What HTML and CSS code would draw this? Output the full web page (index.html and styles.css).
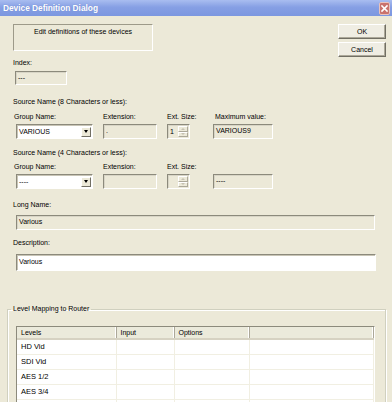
FILE: index.html
```html
<!DOCTYPE html>
<html lang="en">
<head>
  <meta charset="UTF-8" />
  <title>Device Definition Dialog</title>
  <link rel="stylesheet" href="styles.css">
</head>
<body>
  <div class="window">
    <div class="titlebar">
      <span class="title">Device Definition Dialog</span>
      <span class="close-btn">
        <svg width="11" height="13" viewBox="0 0 11 13">
          <path d="M3 4 L8 9 M8 4 L3 9" stroke="#fff" stroke-width="1.6" stroke-linecap="square"/>
        </svg>
      </span>
    </div>

    <div class="content">
      <div class="top-row">
        <div class="note-box">Edit definitions of these devices</div>
        <div class="buttons">
          <button class="btn">OK</button>
          <button class="btn">Cancel</button>
        </div>
      </div>

      <div class="label index-label">Index:</div>
      <div class="field index-field">---</div>

      <div class="label section-label">Source Name (8 Characters or less):</div>
      <div class="name-grid">
        <span class="label col-first">Group Name:</span>
        <span class="label">Extension:</span>
        <span class="label">Ext. Size:</span>
        <span class="label col-max">Maximum value:</span>

        <div class="field combo white">
          <span>VARIOUS</span>
          <span class="drop-btn"><i class="arrow-down"></i></span>
        </div>
        <div class="field ext-field">.</div>
        <div class="field size-field"><span>1</span><span class="spinner"><i class="up"></i><i class="down"></i></span></div>
        <div class="field max-field">VARIOUS9</div>
      </div>

      <div class="label section-label second">Source Name (4 Characters or less):</div>
      <div class="name-grid second-grid">
        <span class="label col-first">Group Name:</span>
        <span class="label">Extension:</span>
        <span class="label">Ext. Size:</span>
        <span></span>

        <div class="field combo white">
          <span>----</span>
          <span class="drop-btn"><i class="arrow-down"></i></span>
        </div>
        <div class="field ext-field"></div>
        <div class="field size-field"><span></span><span class="spinner"><i class="up"></i><i class="down"></i></span></div>
        <div class="field max-field">----</div>
      </div>

      <div class="label long-label">Long Name:</div>
      <div class="field long-field">Various</div>

      <div class="label desc-label">Description:</div>
      <div class="field desc-field white">Various</div>

      <fieldset class="group">
        <legend>Level Mapping to Router</legend>
        <div class="list">
          <table>
            <colgroup>
              <col style="width: 99px">
              <col style="width: 58px">
              <col style="width: 75px">
              <col>
            </colgroup>
            <thead>
              <tr><th>Levels</th><th>Input</th><th>Options</th><th></th></tr>
            </thead>
            <tbody>
              <tr><td>HD Vid</td><td></td><td></td><td></td></tr>
              <tr><td>SDI Vid</td><td></td><td></td><td></td></tr>
              <tr><td>AES 1/2</td><td></td><td></td><td></td></tr>
              <tr><td>AES 3/4</td><td></td><td></td><td></td></tr>
              <tr><td></td><td></td><td></td><td></td></tr>
            </tbody>
          </table>
        </div>
      </fieldset>
    </div>
  </div>
</body>
</html>
```

FILE: styles.css
```css
* { box-sizing: border-box; }

body {
  margin: 0;
  background-color: #ece9d8;
  font-family: "Liberation Sans", Arial, sans-serif;
  font-size: 7px;
  color: #000;
}

.window {
  width: 392px;
  height: 402px;
  overflow: hidden;
  background-color: #ece9d8;
}

.titlebar {
  height: 16px;
  display: flex;
  align-items: center;
  justify-content: space-between;
  padding: 0 2px 0 3px;
  background: linear-gradient(to bottom, #a9bdf0 0%, #869fe4 45%, #7c97e0 100%);
}

.title {
  color: #fff;
  font-weight: bold;
  font-size: 8.3px;
  text-shadow: 0 0 1px #6a83c8;
}

.close-btn {
  width: 11px;
  height: 13px;
  display: flex;
  background-color: #c9726c;
  border: 1px solid #e9c2bd;
  border-radius: 2px;
}
.close-btn svg { margin: -1px; }

.content { padding: 0 6px 0 13px; }

.top-row {
  margin-top: 8px;
  display: flex;
  justify-content: space-between;
  align-items: flex-start;
}

.note-box {
  width: 140px;
  height: 27px;
  border: 1px solid;
  border-color: #9d9a89 #fff #fff #9d9a89;
  text-align: center;
  line-height: 9px;
  padding-top: 2px;
}

.buttons {
  display: flex;
  flex-direction: column;
  gap: 3px;
}

.btn {
  width: 48px;
  height: 15px;
  padding: 0;
  font-family: inherit;
  font-size: 7px;
  color: #000;
  background-color: #efede3;
  border: 1px solid;
  border-color: #fff #716f64 #716f64 #fff;
  box-shadow: inset -1px -1px 0 #aca899;
}

.label {
  display: block;
  line-height: 9px;
  white-space: nowrap;
  color: #000;
}

.field {
  height: 15px;
  border: 1px solid;
  border-color: #8c8a7c #fff #fff #8c8a7c;
  box-shadow: inset 1px 1px 0 #d8d5c6;
  line-height: 12px;
  padding-left: 2px;
  white-space: nowrap;
}
.field.white { background-color: #fff; box-shadow: inset 1px 1px 0 #c8c5b6; }

.index-label { margin-top: 1px; }
.index-field { margin-top: 4px; margin-left: 2px; width: 52px; height: 14px; }

.section-label { margin-top: 12px; }
.section-label.second { margin-top: 9px; }

.name-grid {
  display: grid;
  grid-template-columns: 90px 64px 46px auto;
  row-gap: 3px;
  margin-top: 6px;
}

.col-first { padding-left: 1px; }
.col-max { padding-left: 2px; }

.combo {
  margin-left: 3px;
  width: 77px;
  display: flex;
  justify-content: space-between;
  align-items: center;
  padding-right: 1px;
}

.drop-btn {
  width: 10px;
  height: 10px;
  display: flex;
  align-items: center;
  justify-content: center;
  background-color: #ece9d8;
  border: 1px solid;
  border-color: #fff #716f64 #716f64 #fff;
}

.arrow-down {
  width: 0;
  height: 0;
  border-left: 2.5px solid transparent;
  border-right: 2.5px solid transparent;
  border-top: 3px solid #000;
}

.ext-field { width: 54px; }

.size-field {
  width: 23px;
  display: flex;
  justify-content: space-between;
  align-items: center;
  padding-right: 1px;
}

.spinner {
  width: 10px;
  height: 11px;
  display: flex;
  flex-direction: column;
}
.spinner i {
  flex: 1;
  display: flex;
  align-items: center;
  justify-content: center;
  background-color: #ece9d8;
  border: 1px solid;
  border-color: #fff #aca899 #aca899 #fff;
}
.spinner i::after {
  content: "";
  border-left: 2px solid transparent;
  border-right: 2px solid transparent;
}
.spinner .up::after { border-bottom: 2px solid #c5c2b2; }
.spinner .down::after { border-top: 2px solid #c5c2b2; }

.max-field { width: 60px; }

.second-grid { margin-top: 5px; }
.second-grid .field { height: 15px; }

.long-label { margin-top: 11px; }
.long-field { margin-top: 6px; margin-left: 3px; width: 359px; }

.desc-label { margin-top: 8px; }
.desc-field { margin-top: 7px; margin-left: 3px; width: 360px; height: 17px; line-height: 14px; }

.group {
  margin: 34px 0 0 -6px;
  padding: 13px 10px 0 8px;
  border: 1px solid #d0d0bf;
  box-shadow: 1px 1px 0 #fff, inset 1px 1px 0 #fff;
  min-width: 0;
}

.group legend {
  margin-left: -5px;
  padding: 0 2px;
  line-height: 8px;
  color: #000;
}

.list {
  background-color: #fff;
  border: 1px solid;
  border-color: #8c8a7c #fff #fff #8c8a7c;
  height: 120px;
}

.list table {
  width: 100%;
  border-collapse: collapse;
  table-layout: fixed;
}

.list th {
  height: 12px;
  padding: 0 0 0 4px;
  font-weight: normal;
  text-align: left;
  background-color: #ebeadb;
  border-bottom: 2px solid #d6d2c2;
  border-right: 1px solid #aca899;
  box-shadow: inset -1px 0 0 #fff;
  line-height: 10px;
}

.list td {
  height: 15px;
  padding: 0 0 0 4px;
  font-size: 7.5px;
  border-bottom: 1px solid #f1efe2;
  border-right: 1px solid #f1efe2;
}
```
